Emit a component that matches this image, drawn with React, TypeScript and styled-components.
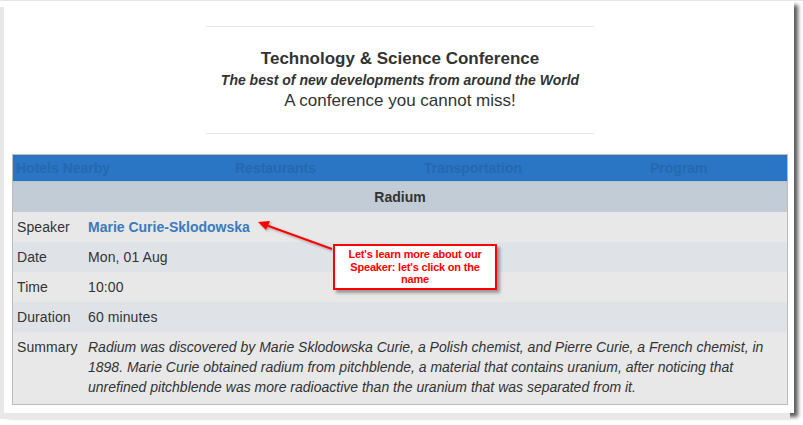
import React from "react";
import styled, { createGlobalStyle } from "styled-components";

const Global = createGlobalStyle`
  html, body { margin: 0; padding: 0; background: #ffffff; }
  body { font-family: "Liberation Sans", Arial, sans-serif; color: #333; }
`;

const Page = styled.div`
  width: 803px;
  height: 425px;
  position: relative;
  overflow: hidden;
  background: #fff;
  border-top: 1px solid #e6e6e6;
  box-sizing: border-box;
`;

const Window = styled.div`
  margin-left: 4px;
  width: 790px;
  height: 412px;
  background: #fff;
  box-sizing: border-box;
  padding: 0 6px 0 8px;
  box-shadow: -4px 6px 0 #e8e8e8, 4px 4px 4px rgba(0, 0, 0, 0.65);
  position: relative;
`;

const Header = styled.header`
  width: 388px;
  margin: 0 auto;
  padding-top: 25px;
`;

const Rule = styled.hr`
  border: 0;
  border-top: 1px solid #e6e6e6;
  margin: 0;
`;

const HeaderText = styled.div`
  text-align: center;
  padding: 21px 0 21px;
  display: flex;
  flex-direction: column;
  align-items: center;
`;

const Title = styled.div`
  font-weight: bold;
  font-size: 17px;
  line-height: 22px;
  color: #333;
`;

const Subtitle = styled.div`
  font-weight: bold;
  font-style: italic;
  font-size: 14px;
  line-height: 20px;
  color: #333;
`;

const Tagline = styled.div`
  font-size: 17px;
  line-height: 22px;
  color: #333;
`;

const Card = styled.div`
  margin-top: 20px;
  border: 1px solid #bcbcbc;
  position: relative;
`;

const Nav = styled.nav`
  display: grid;
  grid-template-columns: 219px 189px 226px 1fr;
  padding-left: 3px;
  height: 26px;
  align-items: center;
  background: #2a76c4;
  border-bottom: 1px solid #b5c2cf;
`;

const NavItem = styled.span`
  font-weight: bold;
  font-size: 14px;
  color: #2469ae;
`;

const Table = styled.div`
  display: flex;
  flex-direction: column;
`;

const Caption = styled.div`
  height: 30px;
  display: flex;
  align-items: center;
  justify-content: center;
  background: #c2ccd6;
  font-weight: bold;
  font-size: 14px;
  color: #333;
`;

const Row = styled.div<{ $alt?: boolean; $tall?: boolean }>`
  display: grid;
  grid-template-columns: 71px 1fr;
  padding: ${(p) => (p.$tall ? "5px 0 7px 4px" : "0 0 0 4px")};
  min-height: ${(p) => (p.$tall ? "59px" : "30px")};
  align-items: ${(p) => (p.$tall ? "start" : "center")};
  background: ${(p) => (p.$alt ? "#dfe3e7" : "#e8e8e8")};
  font-size: 14px;
  letter-spacing: 0.1px;
  color: #333;
`;

const Label = styled.span`
  line-height: 20px;
`;

const Value = styled.span`
  line-height: 20px;
`;

const SpeakerLink = styled.a`
  font-weight: bold;
  font-size: 14px;
  letter-spacing: 0;
  color: #3a7abd;
  text-decoration: none;
`;

const Summary = styled.p`
  margin: 0;
  font-style: italic;
  font-size: 14px;
  letter-spacing: 0;
  line-height: 20px;
  padding-right: 10px;
`;

const Callout = styled.div`
  position: absolute;
  left: 320px;
  top: 89px;
  width: 152px;
  height: 42px;
  border: 2px solid #ff0000;
  background: #fff;
  box-shadow: 3px 3px 3px rgba(0, 0, 0, 0.35);
  color: #ff0000;
  font-weight: bold;
  font-size: 11px;
  letter-spacing: -0.2px;
  line-height: 12.5px;
  text-align: center;
  display: flex;
  align-items: center;
  justify-content: center;
  padding: 0 4px;
  box-sizing: content-box;
`;

const ArrowSvg = styled.svg`
  position: absolute;
  left: 240px;
  top: 65px;
  overflow: visible;
`;

export default function App() {
  return (
    <>
      <Global />
      <Page>
        <Window>
          <Header>
            <Rule />
            <HeaderText>
              <Title>Technology &amp; Science Conference</Title>
              <Subtitle>The best of new developments from around the World</Subtitle>
              <Tagline>A conference you cannot miss!</Tagline>
            </HeaderText>
            <Rule />
          </Header>
          <Card>
            <Nav>
              <NavItem>Hotels Nearby</NavItem>
              <NavItem>Restaurants</NavItem>
              <NavItem>Transportation</NavItem>
              <NavItem>Program</NavItem>
            </Nav>
            <Table>
              <Caption>Radium</Caption>
              <Row>
                <Label>Speaker</Label>
                <Value>
                  <SpeakerLink href="#">Marie Curie-Sklodowska</SpeakerLink>
                </Value>
              </Row>
              <Row $alt>
                <Label>Date</Label>
                <Value>Mon, 01 Aug</Value>
              </Row>
              <Row>
                <Label>Time</Label>
                <Value>10:00</Value>
              </Row>
              <Row $alt>
                <Label>Duration</Label>
                <Value>60 minutes</Value>
              </Row>
              <Row $tall>
                <Label>Summary</Label>
                <Summary>
                  Radium was discovered by Marie Sklodowska Curie, a Polish chemist, and Pierre Curie, a French
                  chemist, in 1898. Marie Curie obtained radium from pitchblende, a material that contains uranium,
                  after noticing that unrefined pitchblende was more radioactive than the uranium that was separated
                  from it.
                </Summary>
              </Row>
            </Table>
            <ArrowSvg width="80" height="40" viewBox="0 0 80 40">
              <defs>
                <filter id="sh" x="-20%" y="-50%" width="140%" height="200%">
                  <feDropShadow dx="1.5" dy="1.5" stdDeviation="1" floodColor="#000" floodOpacity="0.3" />
                </filter>
              </defs>
              <g filter="url(#sh)">
                <line x1="79" y1="29" x2="10" y2="4" stroke="#ff0000" strokeWidth="2" />
                <polygon points="5,2 17,1 13,10" fill="#ff0000" />
              </g>
            </ArrowSvg>
            <Callout>Let's learn more about our Speaker: let's click on the name</Callout>
          </Card>
        </Window>
      </Page>
    </>
  );
}
